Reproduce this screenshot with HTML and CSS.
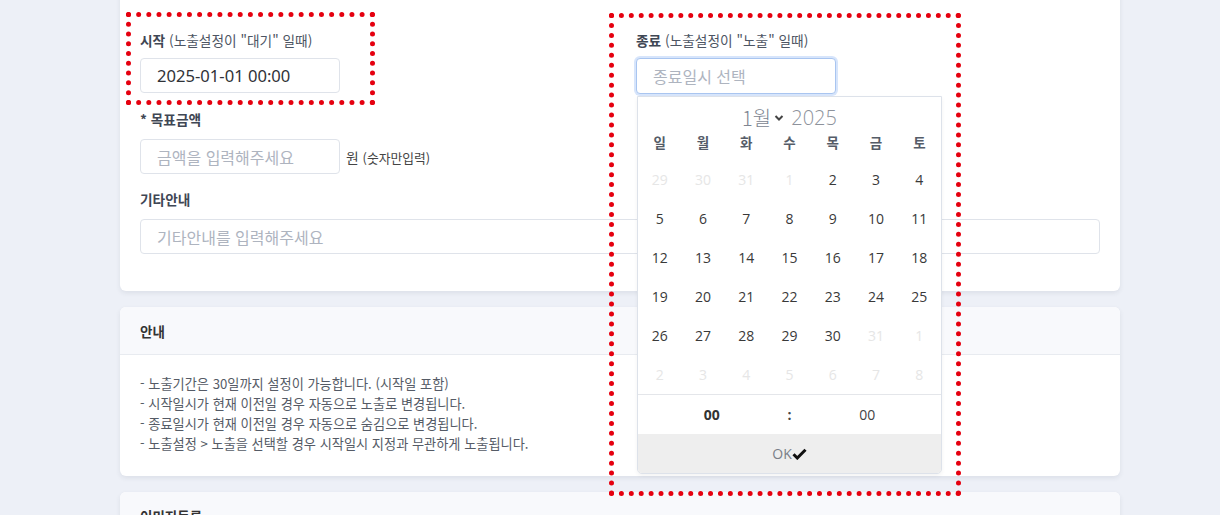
FILE: index.html
```html
<!DOCTYPE html>
<html lang="ko">
<head>
<meta charset="utf-8">
<title>노출 설정</title>
<link rel="stylesheet" href="styles.css">
</head>
<body>
<div class="page">
  <section class="card card-form">
    <div class="row-2">
      <div class="field field-top">
        <label class="label"><b>시작</b> (노출설정이 "대기" 일때)</label>
        <input class="input input-sm input-value" type="text" value="2025-01-01 00:00">
      </div>
      <div class="field field-top">
        <label class="label"><b>종료</b> (노출설정이 "노출" 일때)</label>
        <div class="picker-wrap">
          <input class="input input-sm input-focus" type="text" placeholder="종료일시 선택">
          <div class="calendar">
            <div class="cal-head">
              <span class="cal-month">1월</span>
              <svg class="chev" width="10" height="8" viewBox="0 0 10 8"><path d="M1.5 2 L5 5.5 L8.5 2" fill="none" stroke="#444" stroke-width="2"/></svg>
              <span class="cal-year">2025</span>
            </div>
            <div class="cal-grid cal-week">
              <span>일</span><span>월</span><span>화</span><span>수</span><span>목</span><span>금</span><span>토</span>
            </div>
            <div class="cal-grid cal-days">
              <span class="off">29</span><span class="off">30</span><span class="off">31</span><span class="off">1</span><span>2</span><span>3</span><span>4</span>
              <span>5</span><span>6</span><span>7</span><span>8</span><span>9</span><span>10</span><span>11</span>
              <span>12</span><span>13</span><span>14</span><span>15</span><span>16</span><span>17</span><span>18</span>
              <span>19</span><span>20</span><span>21</span><span>22</span><span>23</span><span>24</span><span>25</span>
              <span>26</span><span>27</span><span>28</span><span>29</span><span>30</span><span class="off">31</span><span class="off">1</span>
              <span class="off">2</span><span class="off">3</span><span class="off">4</span><span class="off">5</span><span class="off">6</span><span class="off">7</span><span class="off">8</span>
            </div>
            <div class="cal-time">
              <span class="hh">00</span><span class="sep">:</span><span class="mm">00</span>
            </div>
            <div class="cal-ok">OK<svg width="15" height="12" viewBox="0 0 15 12"><path d="M1.5 6.2 L5.3 10 L13.5 1.8" fill="none" stroke="#111" stroke-width="3"/></svg></div>
          </div>
        </div>
      </div>
    </div>
    <div class="field">
      <label class="label"><b>* 목표금액</b></label>
      <div class="inline">
        <input class="input input-sm" type="text" placeholder="금액을 입력해주세요">
        <span class="unit">원 <small>(숫자만입력)</small></span>
      </div>
    </div>
    <div class="field">
      <label class="label"><b>기타안내</b></label>
      <input class="input input-full" type="text" placeholder="기타안내를 입력해주세요">
    </div>
  </section>

  <section class="card">
    <header class="card-head">안내</header>
    <div class="card-body notes">
      <p>- 노출기간은 30일까지 설정이 가능합니다. (시작일 포함)</p>
      <p>- 시작일시가 현재 이전일 경우 자동으로 노출로 변경됩니다.</p>
      <p>- 종료일시가 현재 이전일 경우 자동으로 숨김으로 변경됩니다.</p>
      <p>- 노출설정 &gt; 노출을 선택할 경우 시작일시 지정과 무관하게 노출됩니다.</p>
    </div>
  </section>

  <section class="card">
    <header class="card-head">이미지등록</header>
    <div class="card-body"></div>
  </section>
</div>

<div class="mark mark-left"></div>
<div class="mark mark-right"></div>
</body>
</html>
```

FILE: styles.css
```css
* { box-sizing: border-box; }

html, body {
  margin: 0;
  padding: 0;
  background: #edf0f7;
  font-family: "Noto Sans", "Noto Sans CJK KR", sans-serif;
  color: #333;
  overflow: hidden;
  height: 515px;
}

.page {
  width: 1000px;
  margin-left: 120px;
  margin-top: -20px;
  display: flex;
  flex-direction: column;
  gap: 16px;
}

.card {
  background: #fff;
  border-radius: 6px;
  box-shadow: 0 2px 5px rgba(40, 50, 80, 0.09);
}

.card-form {
  padding: 51px 20px 37px;
  display: flex;
  flex-direction: column;
  gap: 16px;
}

.row-2 {
  display: grid;
  grid-template-columns: 496px 1fr;
}

.field {
  display: flex;
  flex-direction: column;
  gap: 11px;
}
.field-top { gap: 9px; }

.label {
  font-size: 13.7px;
  line-height: 18px;
  color: #4d5563;
  font-family: "Noto Sans CJK KR", sans-serif;
}
.label b { font-weight: 700; color: #3f4754; }

.input {
  height: 35px;
  border: 1px solid #dfe3ea;
  border-radius: 4px;
  background: #fff;
  padding: 0 16px;
  font-size: 16px;
  font-family: "Noto Sans CJK KR", sans-serif;
  color: #333;
  outline: none;
}
.input::placeholder { color: #aeb4bf; }
.input-sm { width: 200px; }
.input-full { width: 960px; }
.input-value { font-family: "Noto Sans", sans-serif; font-size: 16.6px; color: #2f3237; }

.input-focus {
  border-color: #a9c5f0;
  box-shadow: 0 0 0 2px #d7e5fb;
  height: 36px;
}

.inline {
  display: flex;
  align-items: center;
  gap: 6px;
}
.unit { font-size: 13.8px; color: #444; font-family: "Noto Sans CJK KR", sans-serif; }
.unit small { font-size: 12.8px; }

.picker-wrap { position: relative; }

.calendar {
  position: absolute;
  top: 38px;
  left: 1px;
  width: 305px;
  background: #fff;
  border: 1px solid #dde2ea;
  border-radius: 0 0 5px 5px;
  box-shadow: 0 2px 4px rgba(0, 0, 0, 0.05);
  z-index: 5;
  overflow: hidden;
}

.cal-head {
  height: 35px;
  display: flex;
  align-items: center;
  justify-content: center;
  padding-top: 6px;
  font-size: 20px;
  font-weight: 300;
  color: #808591;
  font-family: "Noto Sans CJK KR", sans-serif;
}
.cal-head .chev { margin: 0 7px 0 3px; }
.cal-year { font-family: "Open Sans", sans-serif; font-weight: 300; color: #8d929b; }

.cal-grid {
  display: grid;
  grid-template-columns: repeat(7, 1fr);
  text-align: center;
}
.cal-week {
  height: 20px;
  align-items: center;
  font-size: 13.5px;
  font-weight: 700;
  color: #555c68;
  font-family: "Noto Sans CJK KR", sans-serif;
}
.cal-days {
  grid-auto-rows: 39px;
  align-items: center;
  font-size: 14px;
  color: #393939;
  font-family: "Open Sans", sans-serif;
  padding-top: 8px;
}
.cal-days .off { color: #e6e6e6; }

.cal-time {
  height: 40px;
  border-top: 1px solid #e4e6ea;
  display: grid;
  grid-template-columns: 1fr 8px 1fr;
  align-items: center;
  text-align: center;
  font-size: 14px;
  color: #444;
  font-family: "Open Sans", sans-serif;
}
.cal-time .hh { font-weight: 700; color: #333; }
.cal-time .sep { font-weight: 700; color: #444; }

.cal-ok {
  height: 39px;
  background: #eeeeee;
  display: flex;
  align-items: center;
  justify-content: center;
  font-size: 14px;
  color: #7a7f88;
  font-family: "Open Sans", sans-serif;
}

.card-head {
  height: 48px;
  display: flex;
  align-items: center;
  padding: 0 20px;
  background: #f8f9fc;
  border-bottom: 1px solid #e8ebf0;
  border-radius: 6px 6px 0 0;
  font-size: 13.5px;
  font-weight: 700;
  color: #333;
  font-family: "Noto Sans CJK KR", sans-serif;
}

.card-body { padding: 19px 20px 22px; }

.notes p {
  margin: 0;
  font-size: 13.2px;
  line-height: 20px;
  height: 20px;
  color: #555b66;
  font-family: "Noto Sans CJK KR", sans-serif;
}

.mark {
  position: absolute;
  border: 5px dotted #e5000f;
  z-index: 10;
  pointer-events: none;
}
.mark-left { left: 126px; top: 12px; width: 249px; height: 93px; }
.mark-right { left: 609px; top: 13px; width: 352px; height: 483px; }
```
